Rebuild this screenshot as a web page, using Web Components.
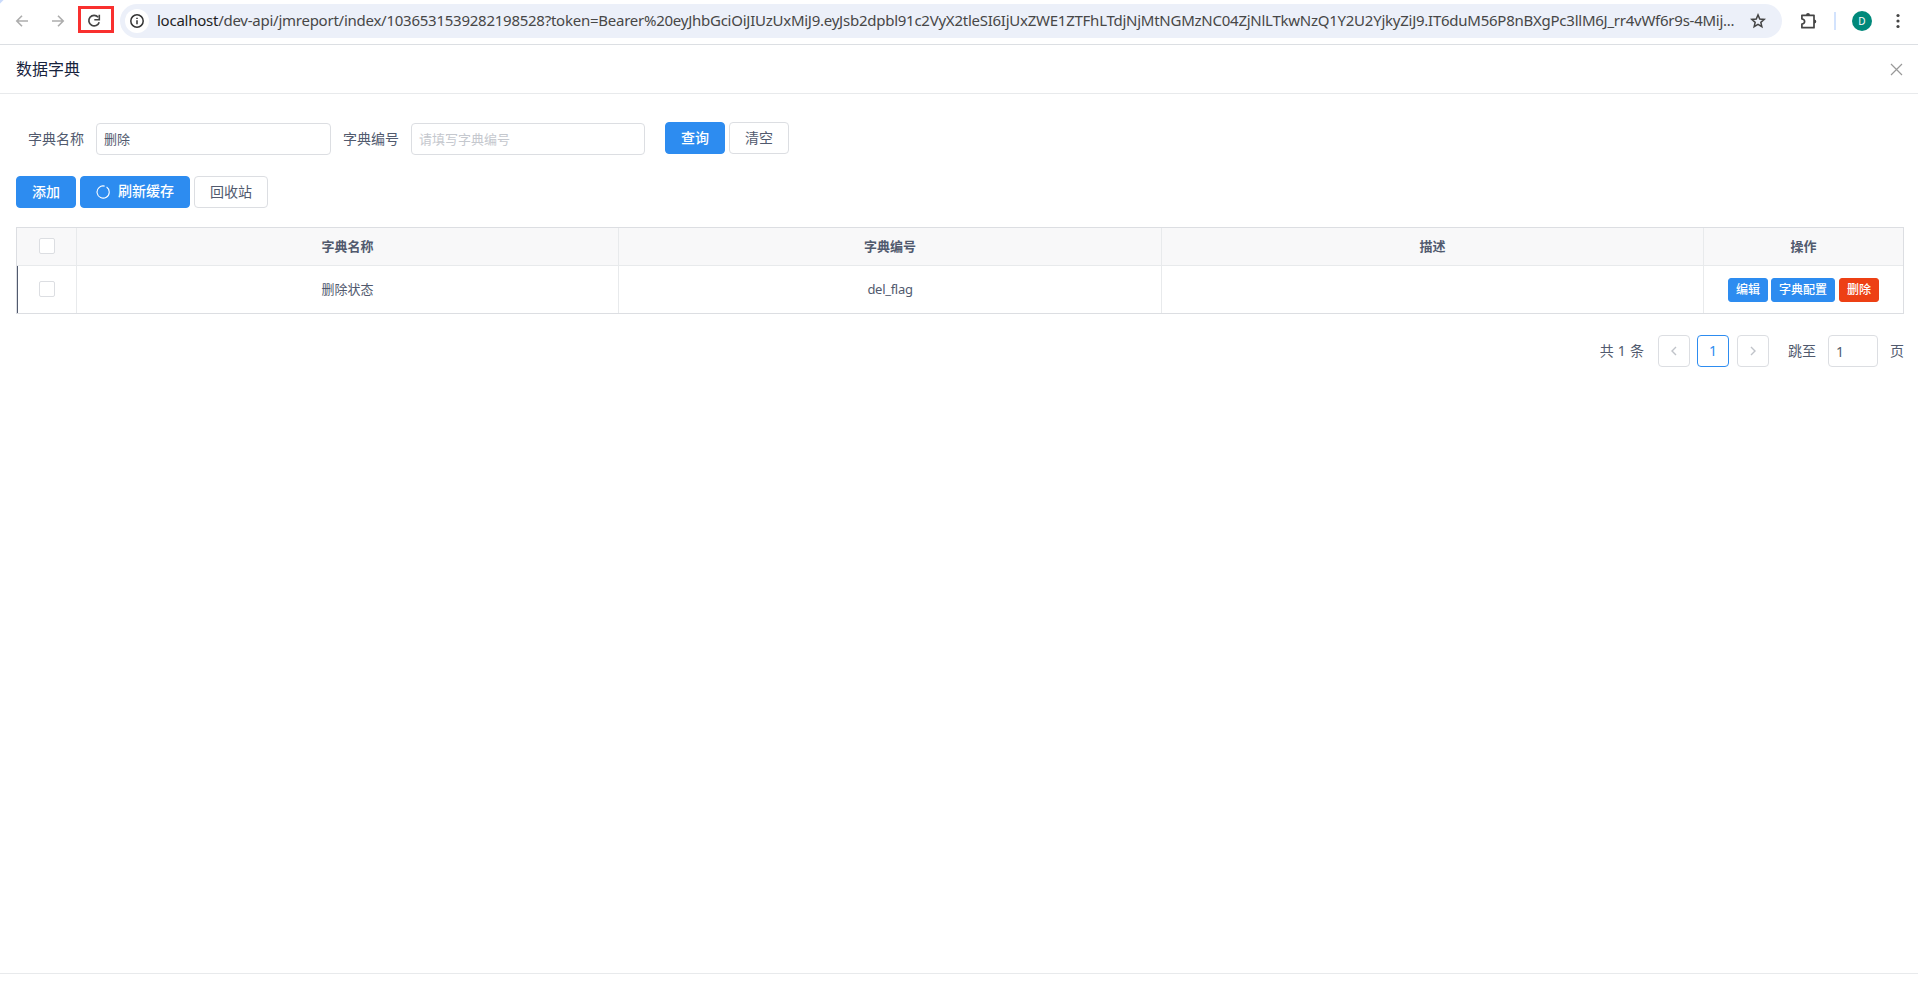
<!DOCTYPE html>
<html lang="zh-CN">
<head>
<meta charset="utf-8">
<title>数据字典</title>
<style>
html,body{margin:0;height:100%;background:#fff;overflow:hidden}
body{font:14px/1.5 "Noto Sans","Noto Sans CJK SC",sans-serif;color:#515a6e}
</style>
</head>
<body>
<dict-app></dict-app>
<script>
const define = (name, html) => customElements.define(name, class extends HTMLElement {
  constructor() {
    super();
    const t = document.createElement('template');
    t.innerHTML = '<style>*{box-sizing:border-box}</style>' + html;
    this.attachShadow({mode: 'open'}).append(t.content.cloneNode(true));
  }
});

define('browser-bar', `
<style>
:host{display:flex;align-items:center;height:45px;border-bottom:1px solid #dcdfe3;box-sizing:border-box;background:linear-gradient(135deg,#c9dafb 2px,#fff 3px);padding:0 10px 2px 12px}
svg{display:block;flex:none}
.reload{flex:none;width:36px;height:27px;border:3px solid #f9302f;margin-left:10px;display:flex;align-items:center;padding:2px 0 0 3px;position:relative;top:-1.5px}
.fwd{margin-left:16px}
.omni{flex:none;width:1662px;height:34px;border-radius:17px;background:#ecf0f9;margin-left:6px;display:flex;align-items:center;padding:0 0 0 5px}
.info{width:24px;height:24px;border-radius:50%;background:#fff;display:grid;place-items:center;flex:none}
.url{flex:none;margin-left:8px;padding-bottom:2px;white-space:nowrap;color:#474747;width:1593px;font:15px/20px "Noto Sans",sans-serif;letter-spacing:-.25px}
.url b{font-weight:400;color:#1f1f1f}
.sep{flex:none;width:2px;height:18px;background:#d3e3fd;margin-left:14px}
.av{flex:none;width:20px;height:20px;border-radius:50%;background:#00897b;color:#fff;font:10px/20px "Noto Sans",sans-serif;text-align:center;margin-left:16px}
</style>
<svg width="20" height="20" viewBox="0 0 20 20" fill="none" stroke="#adadad" stroke-width="1.6"><path d="M16 10H5M10 4.8L4.8 10l5.2 5.2"/></svg>
<svg class="fwd" width="20" height="20" viewBox="0 0 20 20" fill="none" stroke="#adadad" stroke-width="1.6"><path d="M4 10h11M10 4.8l5.200 5.2L10 15.200"/></svg>
<div class="reload"><svg width="20" height="20" viewBox="0 0 20 20"><path d="M14.200 6.200A5.300 5.300 0 1 0 15.200 11.200" fill="none" stroke="#444" stroke-width="1.700"/><path d="M15.300 3.800v5h-5" fill="none" stroke="#444" stroke-width="1.600"/></svg></div>
<div class="omni"><span class="info"><svg width="14" height="14" viewBox="0 0 14 14"><circle cx="7" cy="7" r="6.200" fill="none" stroke="#333" stroke-width="1.500"/><path d="M7 6.200v4M7 3.700v1.400" stroke="#333" stroke-width="1.500"/></svg></span>
<span class="url"><b>localhost</b><span>/dev-api/jmreport/index/1036531539282198528?token=Bearer%20eyJhbGciOiJIUzUxMiJ9.eyJsb2dpbl91c2VyX2tleSI6IjUxZWE1ZTFhLTdjNjMtNGMzNC04ZjNlLTkwNzQ1Y2U2YjkyZiJ9.IT6duM56P8nBXgPc3llM6J_rr4vWf6r9s-4Mij...</span></span>
<svg width="16" height="16" viewBox="0 0 16 16" fill="none" stroke="#444" stroke-width="1.500"><path d="M8 1.900l1.750 4.100 4.500.4-3.400 2.950 1 4.400L8 11.400l-3.850 2.350 1-4.400L1.750 6.400l4.500-.4z"/></svg></div>
<svg style="margin-left:18px" width="20" height="20" viewBox="0 0 20 20"><path d="M1.900 4.300H14V16.700H1.900V13Q4.600 12.700 4.600 10.500T1.900 8Z" fill="none" stroke="#444" stroke-width="1.700" stroke-linejoin="round"/><path d="M6 4.300a2 2.200 0 0 1 4 0zM14 8.500a2.300 2 0 0 1 0 4z" fill="#444"/></svg>
<i class="sep"></i><span class="av">D</span>
<svg style="margin-left:16px" width="20" height="20" viewBox="0 0 20 20" fill="#444"><circle cx="10" cy="4.500" r="1.600"/><circle cx="10" cy="10" r="1.600"/><circle cx="10" cy="15.500" r="1.600"/></svg>`);

define('ui-button', `
<style>
:host{display:inline-flex;align-items:center;justify-content:center;box-sizing:border-box;height:32px;padding:0 15px;border:1px solid #dcdee2;border-radius:4px;color:#515a6e;background:#fff;white-space:nowrap;line-height:20px;font-size:14px}
:host([kind=primary]){background:#2d8cf0;border-color:#2d8cf0;color:#fff;font-weight:500}
:host([kind=error]){background:#ed4014;border-color:#ed4014;color:#fff;font-weight:500}
:host([small]){height:24px;padding:0 7px;font-size:12px;border-radius:3px}
</style><slot></slot>`);

define('ui-input', `
<style>:host{display:flex;align-items:center;box-sizing:border-box;height:32px;border:1px solid #dcdee2;border-radius:4px;padding:0 7px;font-size:13px;line-height:20px}
:host([placeholder]){color:#c5c8ce;padding:0 7px 1px}</style><slot></slot>`);

define('ui-check', `<style>:host{display:block;width:16px;height:16px;box-sizing:border-box;border:1px solid #dcdee2;border-radius:2px;background:#fff}</style>`);

define('panel-header', `
<style>:host{display:flex;justify-content:space-between;align-items:center;box-sizing:border-box;height:49px;border-bottom:1px solid #e8eaec;padding:0 15px 0 16px;font-size:16px;line-height:24px;color:#17233d}
svg{display:block}</style><span><slot></slot></span>
<svg width="13" height="13" viewBox="0 0 13 13" stroke="#999" stroke-width="1.200"><path d="M1 1l11 11M12 1L1 12"/></svg>`);

define('search-form', `
<style>:host{display:flex;align-items:flex-start;margin:28px 0 0 28px;height:34px}
span{line-height:20px;margin-top:7px}
ui-input{margin:1px 12px 0 12px}</style>
<span>字典名称</span><ui-input style="width:235px">删除</ui-input>
<span>字典编号</span><ui-input placeholder style="width:234px;margin-right:20px">请填写字典编号</ui-input>
<ui-button kind="primary" style="margin-right:4px">查询</ui-button><ui-button>清空</ui-button>`);

define('action-bar', `
<style>:host{display:flex;gap:4px;margin:20px 0 0 16px}svg{margin-right:8px}span{padding-bottom:2px}</style>
<ui-button kind="primary">添加</ui-button>
<ui-button kind="primary"><svg width="14" height="14" viewBox="0 0 14 14" fill="none" stroke="#fff" stroke-width="1.100"><path d="M10.600 2A6.100 6.100 0 1 1 8.600 1.100"/></svg><span>刷新缓存</span></ui-button>
<ui-button>回收站</ui-button>`);

define('dict-table', `
<style>
:host{display:block;box-sizing:border-box;width:1888px;height:87px;margin:19px 0 0 16px;border:1px solid #dcdee2;font-size:13px}
.row{display:grid;grid-template-columns:60px 542px 543px 542px 199px}
.row>div{display:flex;align-items:center;justify-content:center;border-right:1px solid #e8eaec;line-height:20px;padding-bottom:2px}
.row>div:last-child{border-right:0}
.row>.ops{padding-bottom:0}
.row>.code{letter-spacing:-.3px}
.head{height:38px;background:#f8f8f9;border-bottom:1px solid #e8eaec;font-weight:600}
.body{height:47px;box-shadow:inset 1px 0 #515a6e}
</style>
<div class="row head"><div><ui-check></ui-check></div><div>字典名称</div><div>字典编号</div><div>描述</div><div>操作</div></div>
<div class="row body"><div><ui-check></ui-check></div><div>删除状态</div><div class="code">del_flag</div><div></div>
<div class="ops"><ui-button small kind="primary">编辑</ui-button><ui-button small kind="primary" style="margin:0 4px 0 3px">字典配置</ui-button><ui-button small kind="error">删除</ui-button></div></div>`);

define('ui-pager', `
<style>:host{display:flex;justify-content:flex-end;align-items:center;margin:21px 14px 0 0;height:32px}
.b{width:32px;height:32px;border:1px solid #dcdee2;border-radius:4px;display:grid;place-items:center;margin-right:8px;line-height:20px}
.on{border-color:#2d8cf0;color:#2d8cf0}
.t{padding-bottom:2px}
svg{display:block}</style>
<span class="t" style="margin-right:14px;word-spacing:.5px">共 1 条</span>
<span class="b" style="margin-right:7px"><svg width="8" height="10" viewBox="0 0 8 10" fill="none" stroke="#c0c3c9" stroke-width="1.400"><path d="M6 1L2 5l4 4"/></svg></span><span class="b on">1</span>
<span class="b" style="margin-right:19px"><svg width="8" height="10" viewBox="0 0 8 10" fill="none" stroke="#c0c3c9" stroke-width="1.400"><path d="M2 1l4 4-4 4"/></svg></span>
<span class="t">跳至</span><ui-input style="width:50px;margin:0 12px;padding-top:1px;font-size:14px">1</ui-input><span class="t">页</span>`);

define('dict-app', `
<style>:host{display:flex;flex-direction:column;height:995px;width:1918px}
main{flex:1}footer{height:22px;border-top:1px solid #e8eaec}</style>
<browser-bar></browser-bar><panel-header>数据字典</panel-header>
<main><search-form></search-form><action-bar></action-bar><dict-table></dict-table><ui-pager></ui-pager></main><footer></footer>`);
</script>
</body>
</html>
